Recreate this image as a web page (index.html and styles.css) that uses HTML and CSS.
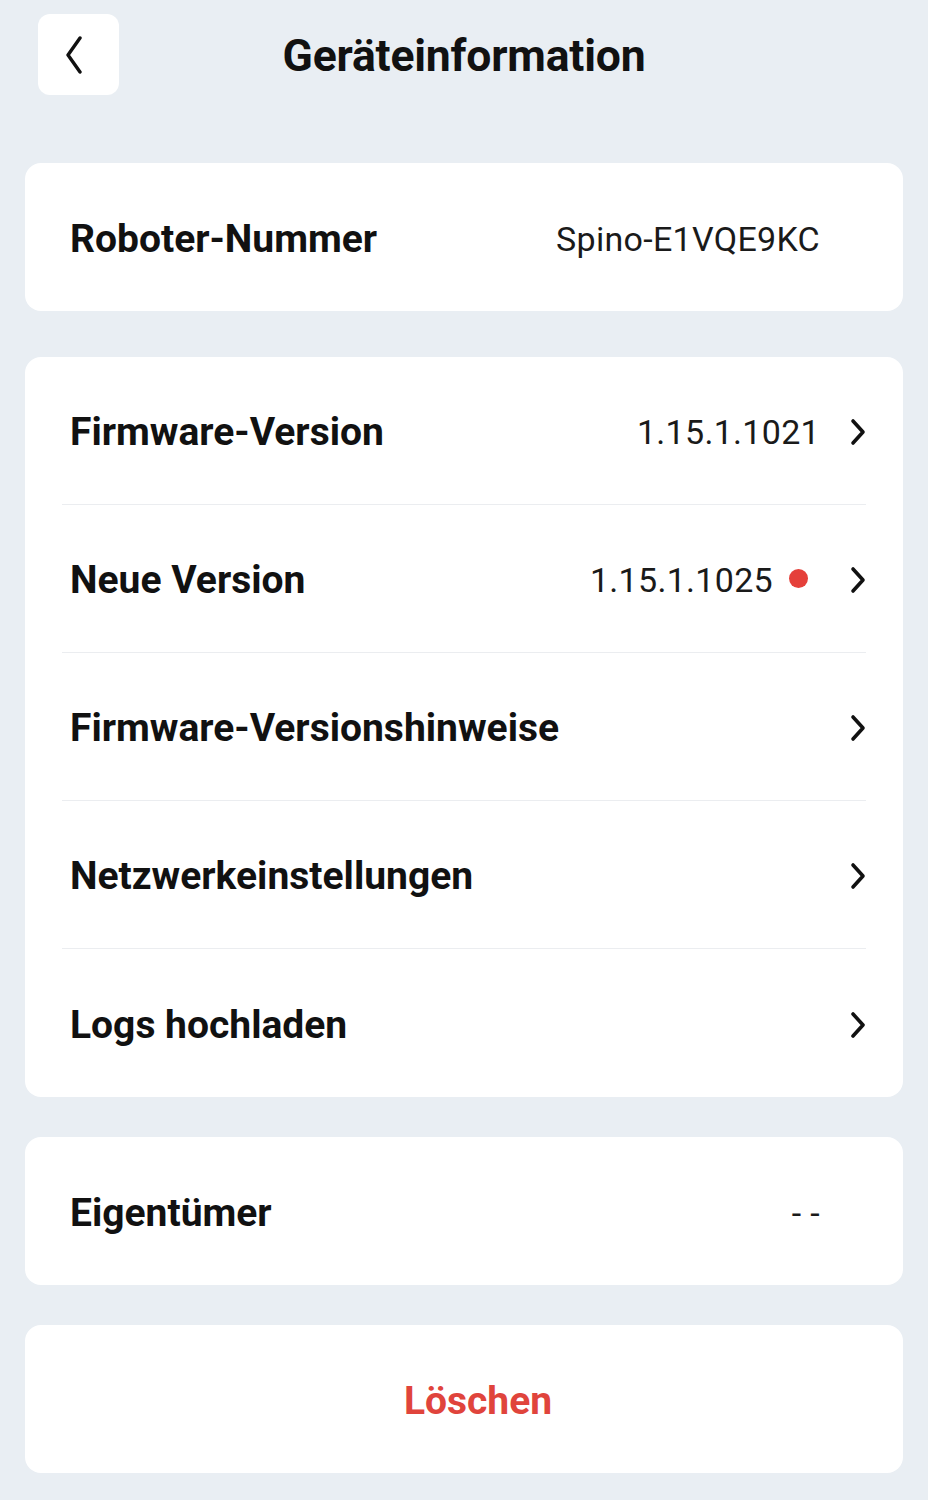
FILE: index.html
```html
<!DOCTYPE html>
<html lang="de">
<head>
<meta charset="utf-8">
<link rel="stylesheet" href="styles.css">
</head>
<body>
<div class="page">
  <header class="header">
    <div class="back">
      <svg width="20" height="38" viewBox="0 0 20 38"><path d="M16 2 L4 19 L16 36" fill="none" stroke="#111" stroke-width="3.4" stroke-linecap="round" stroke-linejoin="round"/></svg>
    </div>
    <h1 class="title">Geräteinformation</h1>
  </header>

  <section class="card">
    <div class="row">
      <span class="label">Roboter-Nummer</span>
      <span class="value">Spino-E1VQE9KC</span>
      <span class="spacer"></span>
    </div>
  </section>

  <section class="card card-list">
    <div class="row sep">
      <span class="label">Firmware-Version</span>
      <span class="value">1.15.1.1021</span>
      <svg class="chev" width="18" height="28" viewBox="0 0 18 28"><path d="M4 3 L14 14 L4 25" fill="none" stroke="#111" stroke-width="3.6" stroke-linecap="round" stroke-linejoin="round"/></svg>
    </div>
    <div class="row sep">
      <span class="label">Neue Version</span>
      <span class="value">1.15.1.1025<i class="dot"></i></span>
      <svg class="chev" width="18" height="28" viewBox="0 0 18 28"><path d="M4 3 L14 14 L4 25" fill="none" stroke="#111" stroke-width="3.6" stroke-linecap="round" stroke-linejoin="round"/></svg>
    </div>
    <div class="row sep">
      <span class="label">Firmware-Versionshinweise</span>
      <span class="value"></span>
      <svg class="chev" width="18" height="28" viewBox="0 0 18 28"><path d="M4 3 L14 14 L4 25" fill="none" stroke="#111" stroke-width="3.6" stroke-linecap="round" stroke-linejoin="round"/></svg>
    </div>
    <div class="row sep">
      <span class="label">Netzwerkeinstellungen</span>
      <span class="value"></span>
      <svg class="chev" width="18" height="28" viewBox="0 0 18 28"><path d="M4 3 L14 14 L4 25" fill="none" stroke="#111" stroke-width="3.6" stroke-linecap="round" stroke-linejoin="round"/></svg>
    </div>
    <div class="row">
      <span class="label">Logs hochladen</span>
      <span class="value"></span>
      <svg class="chev" width="18" height="28" viewBox="0 0 18 28"><path d="M4 3 L14 14 L4 25" fill="none" stroke="#111" stroke-width="3.6" stroke-linecap="round" stroke-linejoin="round"/></svg>
    </div>
  </section>

  <section class="card card-owner">
    <div class="row">
      <span class="label">Eigentümer</span>
      <span class="value">- -</span>
      <span class="spacer"></span>
    </div>
  </section>

  <section class="card card-delete">
    <button class="delete">Löschen</button>
  </section>
</div>
</body>
</html>
```

FILE: styles.css
```css
* { box-sizing: border-box; }
html, body { margin: 0; padding: 0; }
body {
  background: #e9eef3;
  font-family: Roboto, "Noto Sans", "Liberation Sans", sans-serif;
  color: #111;
}
.page {
  width: 928px;
  padding: 14px 25px 28px;
  display: flex;
  flex-direction: column;
}
.header {
  position: relative;
  height: 81px;
  margin-bottom: 68px;
  display: flex;
  align-items: center;
  justify-content: center;
}
.back {
  position: absolute;
  left: 13px;
  top: 0;
  width: 81px;
  height: 81px;
  background: #fff;
  border-radius: 12px;
  display: flex;
  align-items: center;
  justify-content: flex-start;
  padding-left: 26px;
}
.title {
  margin: 0;
  font-size: 44.5px;
  font-weight: 700;
  letter-spacing: -0.2px;
  color: #111;
  transform: translateY(1px);
}
.card {
  background: #fff;
  border-radius: 16px;
  padding: 0 37px;
}
.card + .card { margin-top: 40px; }
.card-list { margin-top: 46px !important; }
.row {
  height: 148px;
  padding-top: 3px;
  display: flex;
  align-items: center;
}
.row.sep { border-bottom: 1px solid #ebedf0; }
.label {
  flex: 1;
  font-size: 39px;
  font-weight: 700;
  padding-left: 8px;
  color: #111;
}
.value {
  font-size: 34px;
  font-weight: 400;
  color: #1a1a1a;
  display: flex;
  align-items: center;
  letter-spacing: 0.3px;
}
.dot {
  display: inline-block;
  width: 19px;
  height: 19px;
  border-radius: 50%;
  background: #e5403a;
  margin-left: 16px;
  margin-right: 12px;
  transform: translateY(-2px);
}
.chev, .spacer {
  width: 18px;
  flex: none;
  margin-left: 29px;
  margin-right: -1px;
}
.card-delete {
  height: 148px;
  padding-top: 3px;
  display: flex;
  align-items: center;
  justify-content: center;
  padding-left: 65px;
}
.delete {
  border: 0;
  background: none;
  font-family: inherit;
  font-size: 39px;
  font-weight: 700;
  color: #e0443c;
  padding: 0;
}
```
